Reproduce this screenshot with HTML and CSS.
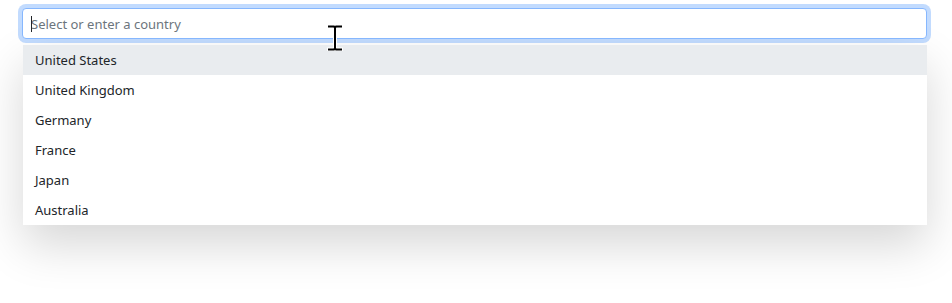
FILE: index.html
```html
<!DOCTYPE html>
<html lang="en">
<head>
    <meta charset="UTF-8">
    <meta name="viewport" content="width=device-width, initial-scale=1.0">
    <title>Country Picker</title>
    <link rel="stylesheet" href="styles.css">
</head>
<body>
    <div class="picker">
        <div class="input-wrap">
            <input type="text" class="picker-input" placeholder="Select or enter a country">
            <span class="caret"></span>
        </div>
        <ul class="picker-menu">
            <li class="picker-item active">United States</li>
            <li class="picker-item">United Kingdom</li>
            <li class="picker-item">Germany</li>
            <li class="picker-item">France</li>
            <li class="picker-item">Japan</li>
            <li class="picker-item">Australia</li>
        </ul>
    </div>
    <svg class="mouse-cursor" width="16" height="26" viewBox="0 0 16 26">
        <path d="M1 1.5h5.5M9.5 1.5H15M8 2v22M1 24.5h5.5M9.5 24.5H15" stroke="#fff" stroke-width="4" stroke-linecap="square"/>
        <path d="M1 1.5h6l1 1 1-1h6M8 2v22M1 24.5h6l1-1 1 1h6" stroke="#000" stroke-width="2" fill="none"/>
    </svg>
</body>
</html>
```

FILE: styles.css
```css
html {
    height: 100%;
}
body {
    font-family: "Noto Sans", "Open Sans", sans-serif;
    background-color: #fff;
    color: #212529;
    margin: 0;
    min-height: 100%;
    box-sizing: border-box;
    padding: 8px 25px 0 22px;
}
.picker {
    position: relative;
}
.input-wrap {
    position: relative;
}
.picker-input {
    display: block;
    box-sizing: border-box;
    width: 100%;
    height: 31px;
    padding: 4px 8px;
    font-family: inherit;
    font-size: 13px;
    color: #212529;
    background-color: #fff;
    border: 1px solid #86b7fe;
    border-radius: 4px;
    box-shadow: 0 0 0 4px rgba(13, 110, 253, 0.25);
    outline: none;
}
.picker-input::placeholder {
    color: #6c757d;
}
.caret {
    position: absolute;
    left: 9px;
    top: 8px;
    width: 1px;
    height: 16px;
    background-color: #212529;
}
.picker-menu {
    list-style: none;
    margin: 6px 0 0 1px;
    padding: 0;
    background-color: #fff;
    box-shadow: 0 20px 44px rgba(0, 0, 0, 0.16);
}
.picker-item {
    height: 30px;
    line-height: 30px;
    padding: 0 12px;
    font-size: 13px;
}
.picker-item.active {
    background-color: #e9ecef;
}
.mouse-cursor {
    position: absolute;
    left: 327px;
    top: 25px;
}
```
